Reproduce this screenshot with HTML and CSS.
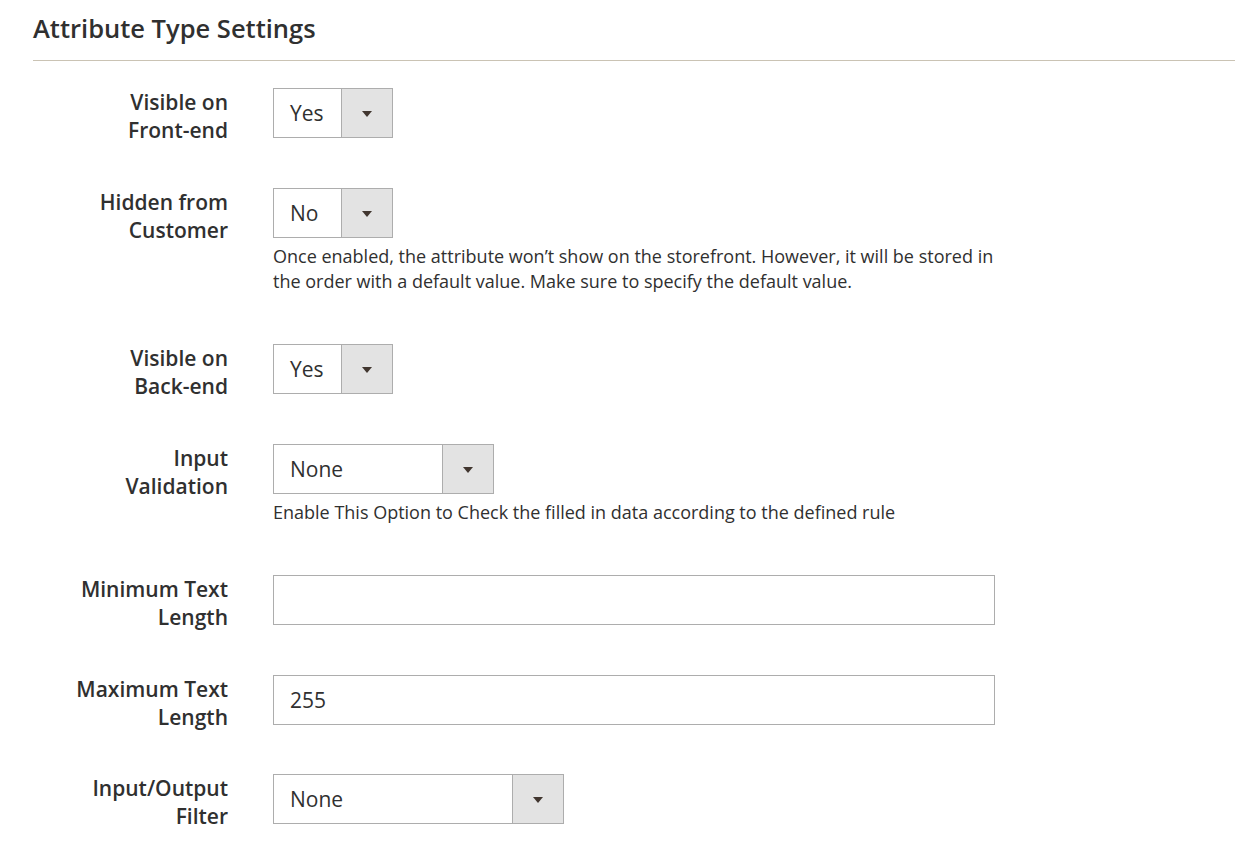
FILE: index.html
```html
<!DOCTYPE html>
<html lang="en">
<head>
	<meta charset="UTF-8">
	<title>Attribute Type Settings</title>
	<link rel="stylesheet" href="styles.css">
</head>
<body>
	<div class="fieldset">
		<h2 class="fieldset-title">Attribute Type Settings</h2>

		<div class="field">
			<label class="field-label">Visible on<br>Front-end</label>
			<div class="field-control">
				<div class="select w-sm"><span>Yes</span><i class="arrow"></i></div>
			</div>
		</div>

		<div class="field">
			<label class="field-label">Hidden from<br>Customer</label>
			<div class="field-control">
				<div class="select w-sm"><span>No</span><i class="arrow"></i></div>
				<div class="note">Once enabled, the attribute won’t show on the storefront. However, it will be stored in<br>the order with a default value. Make sure to specify the default value.</div>
			</div>
		</div>

		<div class="field">
			<label class="field-label">Visible on<br>Back-end</label>
			<div class="field-control">
				<div class="select w-sm"><span>Yes</span><i class="arrow"></i></div>
			</div>
		</div>

		<div class="field">
			<label class="field-label">Input<br>Validation</label>
			<div class="field-control">
				<div class="select w-md"><span>None</span><i class="arrow"></i></div>
				<div class="note">Enable This Option to Check the filled in data according to the defined rule</div>
			</div>
		</div>

		<div class="field">
			<label class="field-label">Minimum Text<br>Length</label>
			<div class="field-control">
				<div class="input"></div>
			</div>
		</div>

		<div class="field last">
			<label class="field-label">Maximum Text<br>Length</label>
			<div class="field-control">
				<div class="input">255</div>
			</div>
		</div>

		<div class="field">
			<label class="field-label">Input/Output<br>Filter</label>
			<div class="field-control">
				<div class="select w-lg"><span>None</span><i class="arrow"></i></div>
			</div>
		</div>
	</div>
</body>
</html>
```

FILE: styles.css
```css
*{
	margin: 0;
	padding: 0;
	box-sizing: border-box;
}
body{
	font-family: "Open Sans", "Liberation Sans", sans-serif;
	color: #303030;
	background: #fff;
	padding: 0 13px 0 33px;
}
.fieldset-title{
	font-size: 25.5px;
	font-weight: 600;
	line-height: 32px;
	padding: 12px 0 16px;
	border-bottom: 1px solid #cac3b4;
	margin-bottom: 27px;
}
/*每一行*/
.field{
	display: grid;
	grid-template-columns: 195px 722px;
	column-gap: 45px;
	align-items: start;
	margin-bottom: 50px;
}
.field.last{
	margin-bottom: 49px;
}
.field-label{
	font-size: 21px;
	font-weight: 600;
	line-height: 28px;
	text-align: right;
	margin-bottom: -6px;
}
.select,.input{
	height: 50px;
	border: 1px solid #adadad;
	background: #fff;
	font-size: 21px;
	line-height: 48px;
	padding-left: 16px;
}
.select{
	display: flex;
	justify-content: space-between;
}
.w-sm{ width: 120px; }
.w-md{ width: 221px; }
.w-lg{ width: 291px; }
.select .arrow{
	width: 51px;
	background: #e3e3e3;
	border-left: 1px solid #adadad;
	display: flex;
	align-items: center;
	justify-content: center;
}
.select .arrow::after{
	content: "";
	border-top: 6px solid #41362f;
	border-left: 5px solid transparent;
	border-right: 5px solid transparent;
	margin-top: 2px;
}
.input{
	width: 722px;
}
.note{
	font-size: 18px;
	line-height: 25px;
	margin-top: 6px;
}
```
